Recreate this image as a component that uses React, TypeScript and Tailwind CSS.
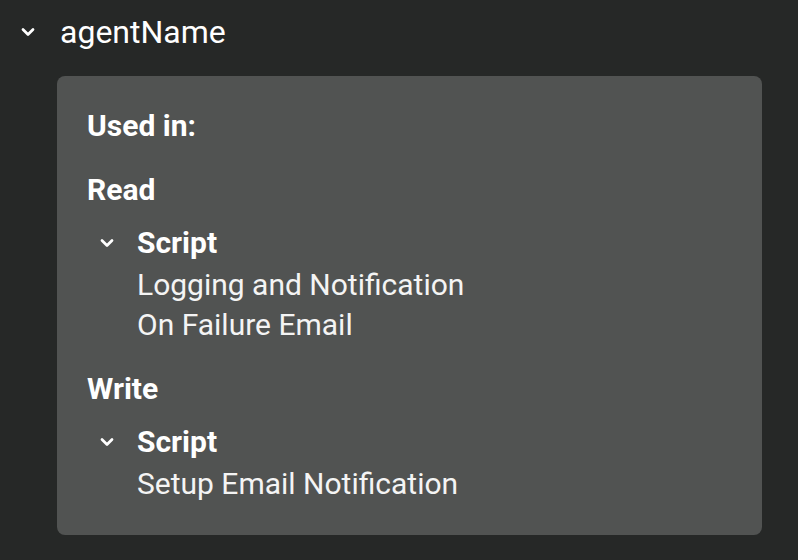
interface UsageGroup {
  label: string;
  kind: string;
  items: string[];
}

const groups: UsageGroup[] = [
  { label: 'Read', kind: 'Script', items: ['Logging and Notification', 'On Failure Email'] },
  { label: 'Write', kind: 'Script', items: ['Setup Email Notification'] },
];

function Chevron({ className }: { className?: string }) {
  return (
    <svg className={className} viewBox="0 0 16 16" fill="none" stroke="currentColor" strokeWidth={2.2} strokeLinecap="round" strokeLinejoin="round">
      <path d="M4 6l4 4 4-4" />
    </svg>
  );
}

export default function App() {
  return (
    <div className="w-[798px] h-[560px] bg-[#262827] text-white font-['Roboto',sans-serif] overflow-hidden">
      <div className="flex items-center h-[40px] mt-[12px]">
        <div className="w-[56px] flex justify-center">
          <Chevron className="w-[20px] h-[20px] text-white" />
        </div>
        <span className="ml-[4px] text-[32px] leading-[40px]">agentName</span>
      </div>
      <div className="ml-[57px] mr-[36px] mt-[24px] bg-[#515352] rounded-[8px] pl-[30px] pt-[30px] pb-[31px] text-[30px] leading-[40px]">
        <div className="font-bold">Used in:</div>
        {groups.map(g => (
          <div key={g.label} className="mt-[24px]">
            <div className="font-bold">{g.label}</div>
            <div className="flex items-start mt-[13px]">
              <div className="w-[50px] h-[40px] flex items-center justify-center pr-[10px]">
                <Chevron className="w-[20px] h-[20px] text-white" />
              </div>
              <div>
                <div className="font-bold">{g.kind}</div>
                <div className="mt-[2px]">
                  {g.items.map(item => (
                    <div key={item} className="text-[#f4f4f4]">{item}</div>
                  ))}
                </div>
              </div>
            </div>
          </div>
        ))}
      </div>
    </div>
  );
}
